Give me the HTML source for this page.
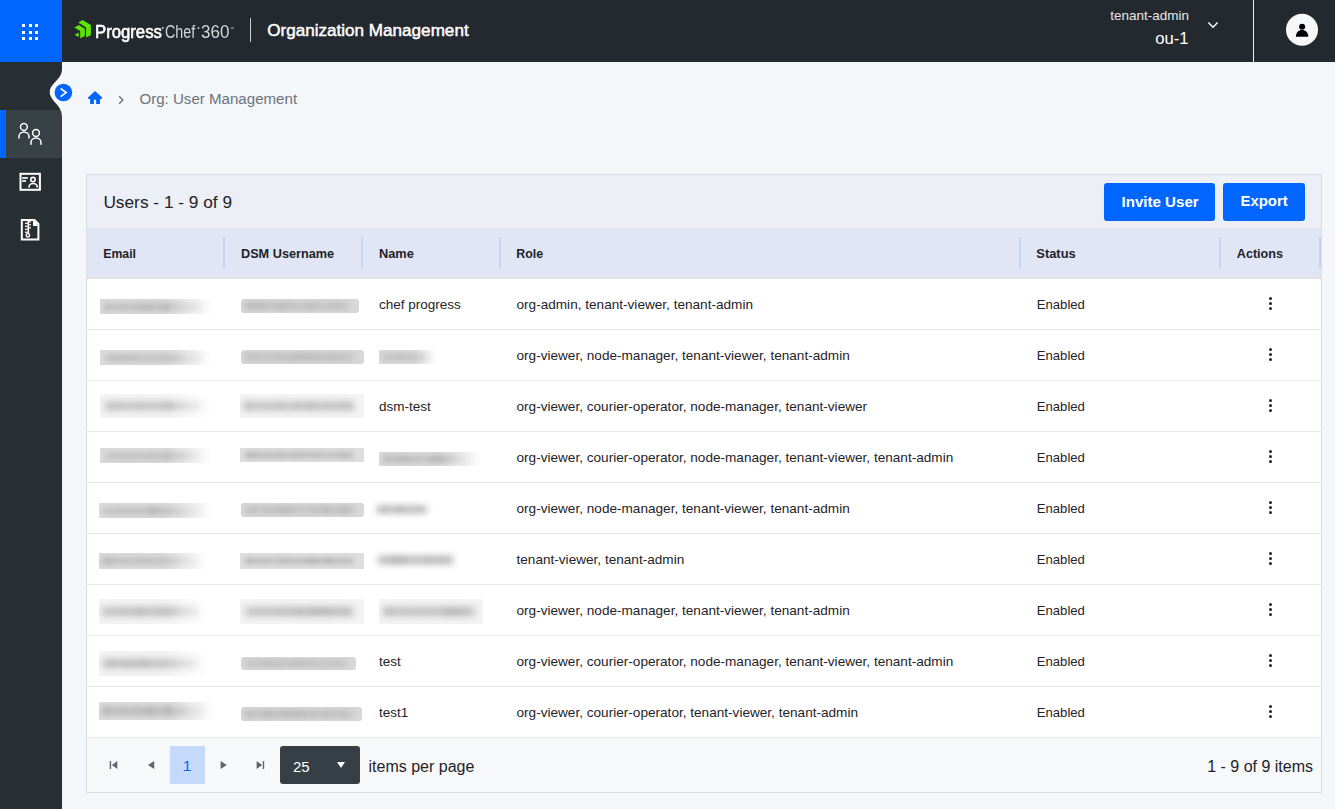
<!DOCTYPE html>
<html><head><meta charset="utf-8"><title>Organization Management</title>
<style>
*{box-sizing:border-box;margin:0;padding:0}
html,body{width:1335px;height:809px;overflow:hidden;background:#f4f7fa;font-family:"Liberation Sans",sans-serif;color:#1f2328}
.a{position:absolute}
.t{position:absolute;white-space:nowrap;line-height:1}
.dot{position:absolute;width:3px;height:3px;background:#fff}
.row{position:absolute;left:87px;width:1234px;height:51px;background:#fff;border-bottom:1px solid #e4e6e9}
.vdiv{position:absolute;top:237px;width:2px;height:31px;background:#c8d5f0}
.kb{position:absolute;width:3px;height:3px;border-radius:50%;background:#1f2328}
.bl{position:absolute}
.br{border-radius:3px}
</style></head>
<body>
<div class="a" style="left:0;top:0;width:1335px;height:62px;background:#242930"></div>
<div class="a" style="left:0;top:0;width:62px;height:62px;background:#0066ff"><div class="dot" style="left:22px;top:24px"></div><div class="dot" style="left:29px;top:24px"></div><div class="dot" style="left:35px;top:24px"></div><div class="dot" style="left:22px;top:31px"></div><div class="dot" style="left:29px;top:31px"></div><div class="dot" style="left:35px;top:31px"></div><div class="dot" style="left:22px;top:37px"></div><div class="dot" style="left:29px;top:37px"></div><div class="dot" style="left:35px;top:37px"></div></div>
<svg class="a" style="left:0;top:0" width="260" height="62" viewBox="0 0 260 62">
<path fill="#5ce500" d="M78.3,22.6 L82.6,20 L90.9,25 L90.9,35.2 L86.1,37.6 L86.1,27.4 Z"/>
<path fill="#5ce500" d="M74.4,27.4 L78.7,25 L84.8,28.7 L84.8,36.1 L80.2,38.5 L80.2,31 Z"/>
<path fill="#5ce500" d="M74.6,34.7 L78.7,32.4 L78.7,37.2 Z"/>
<circle cx="162.8" cy="28" r="0.9" fill="#ddd"/>
<circle cx="198.5" cy="28" r="0.9" fill="#ddd"/>
<rect x="230.6" y="27.6" width="3.4" height="0.9" fill="#bbb"/>
<rect x="250" y="18" width="1" height="24" fill="#c9ccd0"/>
</svg>
<div class="t" style="left:95.30px;top:23.90px;font-size:17.6px;color:#fff;font-weight:400;-webkit-text-stroke:0.6px #fff;transform:scaleX(0.95);transform-origin:0 0;">Progress</div>
<div class="t" style="left:165.30px;top:23.19px;font-size:18.8px;color:#d5d6d8;font-weight:400;transform:scaleX(0.76);transform-origin:0 0;">Chef</div>
<div class="t" style="left:200.80px;top:23.95px;font-size:17.9px;color:#d5d6d8;font-weight:400;transform:scaleX(0.95);transform-origin:0 0;">360</div>
<div class="t" style="left:267.20px;top:21.62px;font-size:17.1px;color:#fff;font-weight:400;-webkit-text-stroke:0.45px #fff;">Organization Management</div>
<div class="t" style="right:146.00px;top:9.27px;font-size:13.5px;color:#e8e8e8;font-weight:400;">tenant-admin</div>
<div class="t" style="right:146.40px;top:30.86px;font-size:16.7px;color:#fff;font-weight:400;">ou-1</div>
<svg class="a" style="left:1200px;top:15px" width="25" height="20" viewBox="1200 15 25 20"><polyline points="1208.4,22.4 1213,27.2 1217.6,22.4" fill="none" stroke="#fff" stroke-width="1.4"/></svg>
<div class="a" style="left:1253px;top:0;width:1px;height:62px;background:#eef0f2"></div>
<svg class="a" style="left:1284px;top:12px" width="36" height="36" viewBox="1284 12 36 36">
<circle cx="1302" cy="29.8" r="16" fill="#f6f7f8"/>
<circle cx="1302.1" cy="26.7" r="3" fill="#000"/>
<path d="M1295.9,36.8 C1295.9,32.6 1298.6,30 1302.1,30 C1305.6,30 1308.3,32.6 1308.3,36.8 Z" fill="#000"/>
</svg>
<div class="a" style="left:0;top:62px;width:62px;height:747px;background:#282f32"></div>
<div class="a" style="left:0;top:110px;width:62px;height:48px;background:#374146"></div>
<div class="a" style="left:0;top:110px;width:6px;height:48px;background:#0066ff"></div>
<svg class="a" style="left:40px;top:62px" width="40" height="60" viewBox="40 62 40 60">
<path d="M62,69 C62,80 49.8,83 49.8,92 C49.8,101 62,105 62,116 Z" fill="#fbfcfd"/>
<circle cx="63.4" cy="92.5" r="8.8" fill="#0066ff"/>
<polyline points="60.6,88.5 66.2,92.6 60.6,96.7" fill="none" stroke="#fff" stroke-width="1.6"/>
</svg>
<svg class="a" style="left:0;top:110px" width="62" height="140" viewBox="0 110 62 140" fill="none" stroke="#fff" stroke-width="1.5">
<circle cx="23.9" cy="126.9" r="3.4"/>
<path d="M19,138.6 V136.5 A4.9,4.4 0 0 1 29,136.5 V138.6"/>
<circle cx="36" cy="133" r="3.4"/>
<path d="M31,144.8 V142.6 A4.9,4.4 0 0 1 41,142.6 V144.8"/>
<rect x="20.5" y="173.8" width="19.4" height="16" stroke-width="2"/>
<line x1="22.2" y1="178" x2="27.8" y2="178" stroke-width="1.7"/>
<line x1="22.2" y1="181" x2="26" y2="181" stroke-width="1.7"/>
<circle cx="32.95" cy="179.6" r="2.2" stroke-width="1.6"/>
<path d="M29.1,187.4 V186.6 A3.9,3 0 0 1 37.2,186.6 V187.4" stroke-width="1.6"/>
<path d="M21.8,220 H34.5 L38.4,223.9 V239.6 H21.8 Z" stroke-width="2" stroke-linejoin="miter"/>
</svg>
<svg class="a" style="left:0;top:210px" width="62" height="40" viewBox="0 210 62 40" fill="#fff">
<path d="M33,221 H34.9 L37.4,223.5 V226 H33 Z"/>
<rect x="27.5" y="221" width="1.6" height="12.5"/>
<rect x="25" y="222.6" width="2.5" height="1.3"/><rect x="25" y="225.6" width="2.5" height="1.3"/><rect x="25" y="228.6" width="2.5" height="1.3"/><rect x="25" y="231.6" width="2.5" height="1.3"/>
<rect x="29.1" y="221.1" width="1.8" height="1.3"/><rect x="29.1" y="224.1" width="1.8" height="1.3"/><rect x="29.1" y="227.1" width="1.8" height="1.3"/>
<circle cx="27.9" cy="235.3" r="1.7" fill="none" stroke="#fff" stroke-width="1.4"/>
</svg>
<svg class="a" style="left:84px;top:86px" width="44" height="22" viewBox="84 86 44 22">
<path fill="#0066ff" d="M95,90.9 L88,97.5 L88.3,98.9 L90.1,98.9 L90.1,104 L93.9,104 L93.9,99.8 L96.1,99.8 L96.1,104 L100,104 L100,98.9 L101.8,98.9 L102.1,97.5 Z"/>
<polyline points="119.2,96.3 122.8,100 119.2,103.7" fill="none" stroke="#6d7378" stroke-width="1.4"/>
</svg>
<div class="t" style="left:139.40px;top:91.02px;font-size:15.1px;color:#6b737d;font-weight:400;">Org: User Management</div>
<div class="a" style="left:86px;top:174px;width:1236px;height:619px;border:1px solid #d9dde2;background:#fff"></div>
<div class="a" style="left:87px;top:175px;width:1234px;height:54px;background:#eceff6;border-bottom:1px solid #dfe2e7"></div>
<div class="a" style="left:87px;top:229px;width:1234px;height:50px;background:#e0e6f6;border-bottom:2px solid #e0e3e7"></div>
<div class="t" style="left:103.40px;top:193.96px;font-size:17.3px;color:#1f2328;font-weight:400;">Users - 1 - 9 of 9</div>
<div class="bl br" style="left:1104px;top:183px;width:111px;height:38px;background:#0066ff"></div>
<div class="bl br" style="left:1223px;top:183px;width:82px;height:38px;background:#0066ff"></div>
<div class="t" style="left:1121.50px;top:194.02px;font-size:15.1px;color:#fff;font-weight:700;">Invite User</div>
<div class="t" style="left:1240.50px;top:194.19px;font-size:14.9px;color:#fff;font-weight:700;">Export</div>
<div class="t" style="left:103.20px;top:248.19px;font-size:12.3px;color:#1f2328;font-weight:700;">Email</div>
<div class="t" style="left:241.00px;top:247.85px;font-size:12.7px;color:#1f2328;font-weight:700;">DSM Username</div>
<div class="t" style="left:379.00px;top:247.76px;font-size:12.8px;color:#1f2328;font-weight:700;">Name</div>
<div class="t" style="left:516.30px;top:248.10px;font-size:12.4px;color:#1f2328;font-weight:700;">Role</div>
<div class="t" style="left:1036.30px;top:247.68px;font-size:12.9px;color:#1f2328;font-weight:700;">Status</div>
<div class="t" style="left:1236.80px;top:247.93px;font-size:12.6px;color:#1f2328;font-weight:700;">Actions</div>
<div class="vdiv" style="left:223px"></div>
<div class="vdiv" style="left:361px"></div>
<div class="vdiv" style="left:499px"></div>
<div class="vdiv" style="left:1019px"></div>
<div class="vdiv" style="left:1219px"></div>
<div class="vdiv" style="left:1319px"></div>
<div class="row" style="top:279px"></div>
<div class="t" style="left:379.00px;top:298.27px;font-size:13.5px;color:#1f2328;font-weight:400;">chef progress</div>
<div class="t" style="left:516.50px;top:298.19px;font-size:13.6px;color:#1f2328;font-weight:400;">org-admin, tenant-viewer, tenant-admin</div>
<div class="t" style="left:1036.80px;top:297.71px;font-size:13.1px;color:#1f2328;font-weight:400;">Enabled</div>
<div class="kb" style="left:1269px;top:296.9px"></div><div class="kb" style="left:1269px;top:301.9px"></div><div class="kb" style="left:1269px;top:306.9px"></div>
<div class="bl" style="left:100px;top:299px;width:113px;height:15px;background:#dcdcdc;-webkit-mask-image:linear-gradient(90deg,#000 60%,rgba(0,0,0,0) 100%);mask-image:linear-gradient(90deg,#000 60%,rgba(0,0,0,0) 100%);overflow:hidden"><div style="position:absolute;left:0;top:0;width:113px;height:15px;filter:blur(3px)"><div style="position:absolute;left:4.5px;top:4.5px;width:99.4px;height:6.0px;background:rgb(190,190,190)"></div><div style="position:absolute;left:3.8px;top:4.5px;width:8.2px;height:6.0px;background:rgb(173,173,173)"></div><div style="position:absolute;left:17.0px;top:4.5px;width:10.9px;height:6.0px;background:rgb(183,183,183)"></div><div style="position:absolute;left:33.3px;top:4.5px;width:13.6px;height:6.0px;background:rgb(178,178,178)"></div><div style="position:absolute;left:45.3px;top:4.5px;width:10.2px;height:6.0px;background:rgb(174,174,174)"></div><div style="position:absolute;left:60.3px;top:4.5px;width:11.0px;height:6.0px;background:rgb(173,173,173)"></div><div style="position:absolute;left:76.9px;top:4.5px;width:8.0px;height:6.0px;background:rgb(179,179,179)"></div><div style="position:absolute;left:90.3px;top:4.5px;width:11.2px;height:6.0px;background:rgb(173,173,173)"></div></div></div>
<div class="bl" style="left:241px;top:299px;width:118px;height:14px;background:#d8d8d8;border-radius:3px;overflow:hidden"><div style="position:absolute;left:0;top:0;width:118px;height:14px;filter:blur(3px)"><div style="position:absolute;left:4.7px;top:4.2px;width:103.8px;height:5.6px;background:rgb(192,192,192)"></div><div style="position:absolute;left:3.6px;top:4.2px;width:14.6px;height:5.6px;background:rgb(178,178,178)"></div><div style="position:absolute;left:18.3px;top:4.2px;width:7.7px;height:5.6px;background:rgb(178,178,178)"></div><div style="position:absolute;left:33.4px;top:4.2px;width:14.8px;height:5.6px;background:rgb(180,180,180)"></div><div style="position:absolute;left:48.8px;top:4.2px;width:7.6px;height:5.6px;background:rgb(189,189,189)"></div><div style="position:absolute;left:63.9px;top:4.2px;width:11.1px;height:5.6px;background:rgb(180,180,180)"></div><div style="position:absolute;left:80.5px;top:4.2px;width:10.4px;height:5.6px;background:rgb(189,189,189)"></div><div style="position:absolute;left:92.7px;top:4.2px;width:7.6px;height:5.6px;background:rgb(182,182,182)"></div></div></div>
<div class="row" style="top:330px"></div>
<div class="t" style="left:516.50px;top:349.19px;font-size:13.6px;color:#1f2328;font-weight:400;">org-viewer, node-manager, tenant-viewer, tenant-admin</div>
<div class="t" style="left:1036.80px;top:348.71px;font-size:13.1px;color:#1f2328;font-weight:400;">Enabled</div>
<div class="kb" style="left:1269px;top:347.9px"></div><div class="kb" style="left:1269px;top:352.9px"></div><div class="kb" style="left:1269px;top:357.9px"></div>
<div class="bl" style="left:100px;top:350px;width:112px;height:15px;background:#dcdcdc;-webkit-mask-image:linear-gradient(90deg,#000 60%,rgba(0,0,0,0) 100%);mask-image:linear-gradient(90deg,#000 60%,rgba(0,0,0,0) 100%);overflow:hidden"><div style="position:absolute;left:0;top:0;width:112px;height:15px;filter:blur(3px)"><div style="position:absolute;left:4.5px;top:4.5px;width:98.6px;height:6.0px;background:rgb(190,190,190)"></div><div style="position:absolute;left:4.6px;top:4.5px;width:12.7px;height:6.0px;background:rgb(183,183,183)"></div><div style="position:absolute;left:17.7px;top:4.5px;width:12.4px;height:6.0px;background:rgb(180,180,180)"></div><div style="position:absolute;left:31.1px;top:4.5px;width:7.2px;height:6.0px;background:rgb(184,184,184)"></div><div style="position:absolute;left:48.0px;top:4.5px;width:10.0px;height:6.0px;background:rgb(188,188,188)"></div><div style="position:absolute;left:62.0px;top:4.5px;width:11.5px;height:6.0px;background:rgb(184,184,184)"></div><div style="position:absolute;left:73.4px;top:4.5px;width:10.9px;height:6.0px;background:rgb(176,176,176)"></div><div style="position:absolute;left:90.2px;top:4.5px;width:13.2px;height:6.0px;background:rgb(176,176,176)"></div></div></div>
<div class="bl" style="left:241px;top:350px;width:123px;height:14px;background:#d8d8d8;border-radius:3px;overflow:hidden"><div style="position:absolute;left:0;top:0;width:123px;height:14px;filter:blur(3px)"><div style="position:absolute;left:4.9px;top:4.2px;width:108.2px;height:5.6px;background:rgb(192,192,192)"></div><div style="position:absolute;left:3.6px;top:4.2px;width:12.8px;height:5.6px;background:rgb(184,184,184)"></div><div style="position:absolute;left:19.3px;top:4.2px;width:15.1px;height:5.6px;background:rgb(189,189,189)"></div><div style="position:absolute;left:34.6px;top:4.2px;width:10.0px;height:5.6px;background:rgb(182,182,182)"></div><div style="position:absolute;left:50.1px;top:4.2px;width:14.7px;height:5.6px;background:rgb(177,177,177)"></div><div style="position:absolute;left:66.1px;top:4.2px;width:12.9px;height:5.6px;background:rgb(179,179,179)"></div><div style="position:absolute;left:83.7px;top:4.2px;width:15.0px;height:5.6px;background:rgb(181,181,181)"></div><div style="position:absolute;left:96.4px;top:4.2px;width:9.3px;height:5.6px;background:rgb(185,185,185)"></div></div></div>
<div class="bl" style="left:379px;top:350px;width:58px;height:14px;background:#dcdcdc;-webkit-mask-image:linear-gradient(90deg,#000 60%,rgba(0,0,0,0) 100%);mask-image:linear-gradient(90deg,#000 60%,rgba(0,0,0,0) 100%);overflow:hidden"><div style="position:absolute;left:0;top:0;width:58px;height:14px;filter:blur(3px)"><div style="position:absolute;left:2.3px;top:4.2px;width:51.0px;height:5.6px;background:rgb(190,190,190)"></div><div style="position:absolute;left:3.0px;top:4.2px;width:15.2px;height:5.6px;background:rgb(188,188,188)"></div><div style="position:absolute;left:17.8px;top:4.2px;width:10.2px;height:5.6px;background:rgb(183,183,183)"></div><div style="position:absolute;left:38.3px;top:4.2px;width:11.0px;height:5.6px;background:rgb(176,176,176)"></div></div></div>
<div class="row" style="top:381px"></div>
<div class="t" style="left:379.00px;top:400.27px;font-size:13.5px;color:#1f2328;font-weight:400;">dsm-test</div>
<div class="t" style="left:516.50px;top:400.19px;font-size:13.6px;color:#1f2328;font-weight:400;">org-viewer, courier-operator, node-manager, tenant-viewer</div>
<div class="t" style="left:1036.80px;top:399.71px;font-size:13.1px;color:#1f2328;font-weight:400;">Enabled</div>
<div class="kb" style="left:1269px;top:398.9px"></div><div class="kb" style="left:1269px;top:403.9px"></div><div class="kb" style="left:1269px;top:408.9px"></div>
<div class="bl" style="left:100px;top:394px;width:113px;height:24px;background:#f4f4f4;-webkit-mask-image:linear-gradient(90deg,#000 60%,rgba(0,0,0,0) 100%);mask-image:linear-gradient(90deg,#000 60%,rgba(0,0,0,0) 100%);overflow:hidden"><div style="position:absolute;left:0;top:0;width:113px;height:24px;filter:blur(3.5px)"><div style="position:absolute;left:4.5px;top:7.7px;width:99.4px;height:8.6px;background:rgb(194,194,194)"></div><div style="position:absolute;left:5.1px;top:7.7px;width:12.1px;height:8.6px;background:rgb(185,185,185)"></div><div style="position:absolute;left:17.5px;top:7.7px;width:7.6px;height:8.6px;background:rgb(186,186,186)"></div><div style="position:absolute;left:31.9px;top:7.7px;width:13.0px;height:8.6px;background:rgb(188,188,188)"></div><div style="position:absolute;left:45.9px;top:7.7px;width:13.6px;height:8.6px;background:rgb(191,191,191)"></div><div style="position:absolute;left:62.6px;top:7.7px;width:12.3px;height:8.6px;background:rgb(178,178,178)"></div><div style="position:absolute;left:76.0px;top:7.7px;width:10.1px;height:8.6px;background:rgb(189,189,189)"></div><div style="position:absolute;left:90.7px;top:7.7px;width:11.8px;height:8.6px;background:rgb(187,187,187)"></div></div></div>
<div class="bl" style="left:240px;top:394px;width:124px;height:24px;background:#f4f4f4;overflow:hidden"><div style="position:absolute;left:0;top:0;width:124px;height:24px;filter:blur(3.5px)"><div style="position:absolute;left:5.0px;top:7.7px;width:109.1px;height:8.6px;background:rgb(194,194,194)"></div><div style="position:absolute;left:3.4px;top:7.7px;width:8.8px;height:8.6px;background:rgb(181,181,181)"></div><div style="position:absolute;left:19.5px;top:7.7px;width:12.8px;height:8.6px;background:rgb(189,189,189)"></div><div style="position:absolute;left:35.0px;top:7.7px;width:8.9px;height:8.6px;background:rgb(181,181,181)"></div><div style="position:absolute;left:53.1px;top:7.7px;width:8.8px;height:8.6px;background:rgb(182,182,182)"></div><div style="position:absolute;left:66.1px;top:7.7px;width:11.0px;height:8.6px;background:rgb(178,178,178)"></div><div style="position:absolute;left:81.3px;top:7.7px;width:15.5px;height:8.6px;background:rgb(186,186,186)"></div><div style="position:absolute;left:99.3px;top:7.7px;width:14.2px;height:8.6px;background:rgb(181,181,181)"></div></div></div>
<div class="row" style="top:432px"></div>
<div class="t" style="left:516.50px;top:451.19px;font-size:13.6px;color:#1f2328;font-weight:400;">org-viewer, courier-operator, node-manager, tenant-viewer, tenant-admin</div>
<div class="t" style="left:1036.80px;top:450.71px;font-size:13.1px;color:#1f2328;font-weight:400;">Enabled</div>
<div class="kb" style="left:1269px;top:449.9px"></div><div class="kb" style="left:1269px;top:454.9px"></div><div class="kb" style="left:1269px;top:459.9px"></div>
<div class="bl" style="left:100px;top:448px;width:112px;height:15px;background:#dcdcdc;-webkit-mask-image:linear-gradient(90deg,#000 60%,rgba(0,0,0,0) 100%);mask-image:linear-gradient(90deg,#000 60%,rgba(0,0,0,0) 100%);overflow:hidden"><div style="position:absolute;left:0;top:0;width:112px;height:15px;filter:blur(3px)"><div style="position:absolute;left:4.5px;top:4.5px;width:98.6px;height:6.0px;background:rgb(190,190,190)"></div><div style="position:absolute;left:5.2px;top:4.5px;width:7.7px;height:6.0px;background:rgb(188,188,188)"></div><div style="position:absolute;left:16.7px;top:4.5px;width:14.0px;height:6.0px;background:rgb(186,186,186)"></div><div style="position:absolute;left:32.8px;top:4.5px;width:7.8px;height:6.0px;background:rgb(186,186,186)"></div><div style="position:absolute;left:47.1px;top:4.5px;width:9.0px;height:6.0px;background:rgb(184,184,184)"></div><div style="position:absolute;left:62.7px;top:4.5px;width:10.0px;height:6.0px;background:rgb(176,176,176)"></div><div style="position:absolute;left:76.7px;top:4.5px;width:13.9px;height:6.0px;background:rgb(173,173,173)"></div><div style="position:absolute;left:87.3px;top:4.5px;width:7.6px;height:6.0px;background:rgb(181,181,181)"></div></div></div>
<div class="bl" style="left:240px;top:448px;width:124px;height:14px;background:#dedede;overflow:hidden"><div style="position:absolute;left:0;top:0;width:124px;height:14px;filter:blur(2.5px)"><div style="position:absolute;left:5.0px;top:4.2px;width:109.1px;height:5.6px;background:rgb(194,194,194)"></div><div style="position:absolute;left:5.5px;top:4.2px;width:11.1px;height:5.6px;background:rgb(179,179,179)"></div><div style="position:absolute;left:18.8px;top:4.2px;width:13.2px;height:5.6px;background:rgb(187,187,187)"></div><div style="position:absolute;left:34.3px;top:4.2px;width:13.0px;height:5.6px;background:rgb(187,187,187)"></div><div style="position:absolute;left:51.0px;top:4.2px;width:13.3px;height:5.6px;background:rgb(185,185,185)"></div><div style="position:absolute;left:67.2px;top:4.2px;width:15.3px;height:5.6px;background:rgb(188,188,188)"></div><div style="position:absolute;left:81.8px;top:4.2px;width:12.6px;height:5.6px;background:rgb(192,192,192)"></div><div style="position:absolute;left:98.4px;top:4.2px;width:11.2px;height:5.6px;background:rgb(183,183,183)"></div></div></div>
<div class="bl" style="left:379px;top:452px;width:103px;height:14px;background:#dcdcdc;-webkit-mask-image:linear-gradient(90deg,#000 60%,rgba(0,0,0,0) 100%);mask-image:linear-gradient(90deg,#000 60%,rgba(0,0,0,0) 100%);overflow:hidden"><div style="position:absolute;left:0;top:0;width:103px;height:14px;filter:blur(3px)"><div style="position:absolute;left:4.1px;top:4.2px;width:90.6px;height:5.6px;background:rgb(190,190,190)"></div><div style="position:absolute;left:3.0px;top:4.2px;width:10.5px;height:5.6px;background:rgb(178,178,178)"></div><div style="position:absolute;left:18.1px;top:4.2px;width:13.1px;height:5.6px;background:rgb(172,172,172)"></div><div style="position:absolute;left:34.9px;top:4.2px;width:9.5px;height:5.6px;background:rgb(183,183,183)"></div><div style="position:absolute;left:50.3px;top:4.2px;width:14.8px;height:5.6px;background:rgb(172,172,172)"></div><div style="position:absolute;left:63.7px;top:4.2px;width:14.2px;height:5.6px;background:rgb(174,174,174)"></div><div style="position:absolute;left:79.1px;top:4.2px;width:8.4px;height:5.6px;background:rgb(183,183,183)"></div></div></div>
<div class="row" style="top:483px"></div>
<div class="t" style="left:516.50px;top:502.19px;font-size:13.6px;color:#1f2328;font-weight:400;">org-viewer, node-manager, tenant-viewer, tenant-admin</div>
<div class="t" style="left:1036.80px;top:501.71px;font-size:13.1px;color:#1f2328;font-weight:400;">Enabled</div>
<div class="kb" style="left:1269px;top:500.9px"></div><div class="kb" style="left:1269px;top:505.9px"></div><div class="kb" style="left:1269px;top:510.9px"></div>
<div class="bl" style="left:99px;top:503px;width:114px;height:15px;background:#dcdcdc;-webkit-mask-image:linear-gradient(90deg,#000 60%,rgba(0,0,0,0) 100%);mask-image:linear-gradient(90deg,#000 60%,rgba(0,0,0,0) 100%);overflow:hidden"><div style="position:absolute;left:0;top:0;width:114px;height:15px;filter:blur(3px)"><div style="position:absolute;left:4.6px;top:4.5px;width:100.3px;height:6.0px;background:rgb(190,190,190)"></div><div style="position:absolute;left:4.0px;top:4.5px;width:10.2px;height:6.0px;background:rgb(186,186,186)"></div><div style="position:absolute;left:19.2px;top:4.5px;width:9.0px;height:6.0px;background:rgb(184,184,184)"></div><div style="position:absolute;left:32.8px;top:4.5px;width:7.5px;height:6.0px;background:rgb(185,185,185)"></div><div style="position:absolute;left:48.2px;top:4.5px;width:14.0px;height:6.0px;background:rgb(172,172,172)"></div><div style="position:absolute;left:60.9px;top:4.5px;width:14.1px;height:6.0px;background:rgb(187,187,187)"></div><div style="position:absolute;left:77.1px;top:4.5px;width:7.2px;height:6.0px;background:rgb(182,182,182)"></div><div style="position:absolute;left:90.8px;top:4.5px;width:8.8px;height:6.0px;background:rgb(188,188,188)"></div></div></div>
<div class="bl" style="left:241px;top:503px;width:123px;height:14px;background:#d8d8d8;border-radius:3px;overflow:hidden"><div style="position:absolute;left:0;top:0;width:123px;height:14px;filter:blur(3px)"><div style="position:absolute;left:4.9px;top:4.2px;width:108.2px;height:5.6px;background:rgb(192,192,192)"></div><div style="position:absolute;left:5.1px;top:4.2px;width:8.8px;height:5.6px;background:rgb(183,183,183)"></div><div style="position:absolute;left:21.6px;top:4.2px;width:11.6px;height:5.6px;background:rgb(187,187,187)"></div><div style="position:absolute;left:34.5px;top:4.2px;width:15.2px;height:5.6px;background:rgb(177,177,177)"></div><div style="position:absolute;left:51.3px;top:4.2px;width:9.4px;height:5.6px;background:rgb(190,190,190)"></div><div style="position:absolute;left:67.0px;top:4.2px;width:11.7px;height:5.6px;background:rgb(189,189,189)"></div><div style="position:absolute;left:81.1px;top:4.2px;width:8.3px;height:5.6px;background:rgb(176,176,176)"></div><div style="position:absolute;left:96.2px;top:4.2px;width:12.9px;height:5.6px;background:rgb(178,178,178)"></div></div></div>
<div class="bl" style="left:376px;top:501px;width:55px;height:17px;background:transparent;"><div style="position:absolute;left:0;top:0;width:55px;height:17px;filter:blur(3.5px)"><div style="position:absolute;left:2.2px;top:4.8px;width:48.4px;height:7.5px;background:rgb(184,184,184)"></div><div style="position:absolute;left:0.5px;top:4.8px;width:11.4px;height:7.5px;background:rgb(169,169,169)"></div><div style="position:absolute;left:17.6px;top:4.8px;width:12.5px;height:7.5px;background:rgb(167,167,167)"></div><div style="position:absolute;left:35.2px;top:4.8px;width:14.2px;height:7.5px;background:rgb(174,174,174)"></div></div></div>
<div class="row" style="top:534px"></div>
<div class="t" style="left:516.50px;top:553.19px;font-size:13.6px;color:#1f2328;font-weight:400;">tenant-viewer, tenant-admin</div>
<div class="t" style="left:1036.80px;top:552.71px;font-size:13.1px;color:#1f2328;font-weight:400;">Enabled</div>
<div class="kb" style="left:1269px;top:551.9px"></div><div class="kb" style="left:1269px;top:556.9px"></div><div class="kb" style="left:1269px;top:561.9px"></div>
<div class="bl" style="left:99px;top:553px;width:109px;height:16px;background:#dcdcdc;-webkit-mask-image:linear-gradient(90deg,#000 60%,rgba(0,0,0,0) 100%);mask-image:linear-gradient(90deg,#000 60%,rgba(0,0,0,0) 100%);overflow:hidden"><div style="position:absolute;left:0;top:0;width:109px;height:16px;filter:blur(3px)"><div style="position:absolute;left:4.4px;top:4.8px;width:95.9px;height:6.4px;background:rgb(190,190,190)"></div><div style="position:absolute;left:2.5px;top:4.8px;width:12.7px;height:6.4px;background:rgb(172,172,172)"></div><div style="position:absolute;left:19.2px;top:4.8px;width:10.6px;height:6.4px;background:rgb(187,187,187)"></div><div style="position:absolute;left:35.5px;top:4.8px;width:15.8px;height:6.4px;background:rgb(184,184,184)"></div><div style="position:absolute;left:50.4px;top:4.8px;width:13.9px;height:6.4px;background:rgb(188,188,188)"></div><div style="position:absolute;left:70.0px;top:4.8px;width:11.0px;height:6.4px;background:rgb(184,184,184)"></div><div style="position:absolute;left:86.2px;top:4.8px;width:13.2px;height:6.4px;background:rgb(187,187,187)"></div></div></div>
<div class="bl" style="left:240px;top:553px;width:124px;height:16px;background:#dedede;overflow:hidden"><div style="position:absolute;left:0;top:0;width:124px;height:16px;filter:blur(2.5px)"><div style="position:absolute;left:5.0px;top:4.8px;width:109.1px;height:6.4px;background:rgb(194,194,194)"></div><div style="position:absolute;left:5.3px;top:4.8px;width:9.4px;height:6.4px;background:rgb(182,182,182)"></div><div style="position:absolute;left:18.7px;top:4.8px;width:11.3px;height:6.4px;background:rgb(187,187,187)"></div><div style="position:absolute;left:37.9px;top:4.8px;width:14.1px;height:6.4px;background:rgb(184,184,184)"></div><div style="position:absolute;left:53.6px;top:4.8px;width:14.1px;height:6.4px;background:rgb(189,189,189)"></div><div style="position:absolute;left:66.4px;top:4.8px;width:12.3px;height:6.4px;background:rgb(176,176,176)"></div><div style="position:absolute;left:82.9px;top:4.8px;width:11.5px;height:6.4px;background:rgb(178,178,178)"></div><div style="position:absolute;left:98.3px;top:4.8px;width:12.9px;height:6.4px;background:rgb(187,187,187)"></div></div></div>
<div class="bl" style="left:376px;top:550px;width:84px;height:20px;background:transparent;"><div style="position:absolute;left:0;top:0;width:84px;height:20px;filter:blur(3.5px)"><div style="position:absolute;left:3.4px;top:5.6px;width:73.9px;height:8.8px;background:rgb(184,184,184)"></div><div style="position:absolute;left:2.3px;top:5.6px;width:14.3px;height:8.8px;background:rgb(180,180,180)"></div><div style="position:absolute;left:16.2px;top:5.6px;width:13.7px;height:8.8px;background:rgb(166,166,166)"></div><div style="position:absolute;left:33.6px;top:5.6px;width:7.5px;height:8.8px;background:rgb(181,181,181)"></div><div style="position:absolute;left:47.2px;top:5.6px;width:13.4px;height:8.8px;background:rgb(175,175,175)"></div><div style="position:absolute;left:63.5px;top:5.6px;width:12.8px;height:8.8px;background:rgb(176,176,176)"></div></div></div>
<div class="row" style="top:585px"></div>
<div class="t" style="left:516.50px;top:604.19px;font-size:13.6px;color:#1f2328;font-weight:400;">org-viewer, node-manager, tenant-viewer, tenant-admin</div>
<div class="t" style="left:1036.80px;top:603.71px;font-size:13.1px;color:#1f2328;font-weight:400;">Enabled</div>
<div class="kb" style="left:1269px;top:602.9px"></div><div class="kb" style="left:1269px;top:607.9px"></div><div class="kb" style="left:1269px;top:612.9px"></div>
<div class="bl" style="left:99px;top:599px;width:111px;height:25px;background:#f4f4f4;-webkit-mask-image:linear-gradient(90deg,#000 60%,rgba(0,0,0,0) 100%);mask-image:linear-gradient(90deg,#000 60%,rgba(0,0,0,0) 100%);overflow:hidden"><div style="position:absolute;left:0;top:0;width:111px;height:25px;filter:blur(3.5px)"><div style="position:absolute;left:4.4px;top:8.0px;width:97.7px;height:9.0px;background:rgb(194,194,194)"></div><div style="position:absolute;left:2.7px;top:8.0px;width:14.4px;height:9.0px;background:rgb(190,190,190)"></div><div style="position:absolute;left:20.4px;top:8.0px;width:15.8px;height:9.0px;background:rgb(189,189,189)"></div><div style="position:absolute;left:37.0px;top:8.0px;width:10.4px;height:9.0px;background:rgb(182,182,182)"></div><div style="position:absolute;left:53.9px;top:8.0px;width:13.6px;height:9.0px;background:rgb(185,185,185)"></div><div style="position:absolute;left:67.7px;top:8.0px;width:11.7px;height:9.0px;background:rgb(179,179,179)"></div><div style="position:absolute;left:86.6px;top:8.0px;width:12.1px;height:9.0px;background:rgb(183,183,183)"></div></div></div>
<div class="bl" style="left:240px;top:599px;width:124px;height:25px;background:#f4f4f4;overflow:hidden"><div style="position:absolute;left:0;top:0;width:124px;height:25px;filter:blur(3.5px)"><div style="position:absolute;left:5.0px;top:8.0px;width:109.1px;height:9.0px;background:rgb(194,194,194)"></div><div style="position:absolute;left:5.9px;top:8.0px;width:15.1px;height:9.0px;background:rgb(192,192,192)"></div><div style="position:absolute;left:19.0px;top:8.0px;width:12.3px;height:9.0px;background:rgb(189,189,189)"></div><div style="position:absolute;left:36.0px;top:8.0px;width:13.4px;height:9.0px;background:rgb(186,186,186)"></div><div style="position:absolute;left:51.5px;top:8.0px;width:12.1px;height:9.0px;background:rgb(181,181,181)"></div><div style="position:absolute;left:67.5px;top:8.0px;width:13.8px;height:9.0px;background:rgb(179,179,179)"></div><div style="position:absolute;left:81.1px;top:8.0px;width:13.5px;height:9.0px;background:rgb(179,179,179)"></div><div style="position:absolute;left:100.0px;top:8.0px;width:8.2px;height:9.0px;background:rgb(181,181,181)"></div></div></div>
<div class="bl" style="left:379px;top:599px;width:104px;height:25px;background:#f4f4f4;overflow:hidden"><div style="position:absolute;left:0;top:0;width:104px;height:25px;filter:blur(3.5px)"><div style="position:absolute;left:4.2px;top:8.0px;width:91.5px;height:9.0px;background:rgb(194,194,194)"></div><div style="position:absolute;left:4.9px;top:8.0px;width:8.4px;height:9.0px;background:rgb(181,181,181)"></div><div style="position:absolute;left:17.7px;top:8.0px;width:10.3px;height:9.0px;background:rgb(189,189,189)"></div><div style="position:absolute;left:34.5px;top:8.0px;width:10.9px;height:9.0px;background:rgb(190,190,190)"></div><div style="position:absolute;left:51.2px;top:8.0px;width:10.1px;height:9.0px;background:rgb(190,190,190)"></div><div style="position:absolute;left:63.7px;top:8.0px;width:15.2px;height:9.0px;background:rgb(178,178,178)"></div><div style="position:absolute;left:80.1px;top:8.0px;width:8.7px;height:9.0px;background:rgb(180,180,180)"></div></div></div>
<div class="row" style="top:636px"></div>
<div class="t" style="left:379.00px;top:655.27px;font-size:13.5px;color:#1f2328;font-weight:400;">test</div>
<div class="t" style="left:516.50px;top:655.19px;font-size:13.6px;color:#1f2328;font-weight:400;">org-viewer, courier-operator, node-manager, tenant-viewer, tenant-admin</div>
<div class="t" style="left:1036.80px;top:654.71px;font-size:13.1px;color:#1f2328;font-weight:400;">Enabled</div>
<div class="kb" style="left:1269px;top:653.9px"></div><div class="kb" style="left:1269px;top:658.9px"></div><div class="kb" style="left:1269px;top:663.9px"></div>
<div class="bl" style="left:99px;top:651px;width:111px;height:25px;background:#f4f4f4;-webkit-mask-image:linear-gradient(90deg,#000 60%,rgba(0,0,0,0) 100%);mask-image:linear-gradient(90deg,#000 60%,rgba(0,0,0,0) 100%);overflow:hidden"><div style="position:absolute;left:0;top:0;width:111px;height:25px;filter:blur(3.5px)"><div style="position:absolute;left:4.4px;top:8.0px;width:97.7px;height:9.0px;background:rgb(194,194,194)"></div><div style="position:absolute;left:5.6px;top:8.0px;width:10.8px;height:9.0px;background:rgb(183,183,183)"></div><div style="position:absolute;left:19.5px;top:8.0px;width:15.8px;height:9.0px;background:rgb(185,185,185)"></div><div style="position:absolute;left:36.9px;top:8.0px;width:12.7px;height:9.0px;background:rgb(183,183,183)"></div><div style="position:absolute;left:51.9px;top:8.0px;width:13.3px;height:9.0px;background:rgb(192,192,192)"></div><div style="position:absolute;left:67.6px;top:8.0px;width:10.4px;height:9.0px;background:rgb(191,191,191)"></div><div style="position:absolute;left:84.5px;top:8.0px;width:14.8px;height:9.0px;background:rgb(192,192,192)"></div></div></div>
<div class="bl" style="left:241px;top:657px;width:115px;height:13px;background:#d8d8d8;border-radius:3px;overflow:hidden"><div style="position:absolute;left:0;top:0;width:115px;height:13px;filter:blur(3px)"><div style="position:absolute;left:4.6px;top:3.9px;width:101.2px;height:5.2px;background:rgb(192,192,192)"></div><div style="position:absolute;left:5.9px;top:3.9px;width:7.9px;height:5.2px;background:rgb(182,182,182)"></div><div style="position:absolute;left:20.0px;top:3.9px;width:13.7px;height:5.2px;background:rgb(178,178,178)"></div><div style="position:absolute;left:35.1px;top:3.9px;width:10.1px;height:5.2px;background:rgb(180,180,180)"></div><div style="position:absolute;left:49.7px;top:3.9px;width:10.6px;height:5.2px;background:rgb(174,174,174)"></div><div style="position:absolute;left:63.8px;top:3.9px;width:8.9px;height:5.2px;background:rgb(179,179,179)"></div><div style="position:absolute;left:76.3px;top:3.9px;width:9.7px;height:5.2px;background:rgb(187,187,187)"></div><div style="position:absolute;left:92.2px;top:3.9px;width:8.6px;height:5.2px;background:rgb(185,185,185)"></div></div></div>
<div class="row" style="top:687px"></div>
<div class="t" style="left:379.00px;top:706.27px;font-size:13.5px;color:#1f2328;font-weight:400;">test1</div>
<div class="t" style="left:516.50px;top:706.19px;font-size:13.6px;color:#1f2328;font-weight:400;">org-viewer, courier-operator, tenant-viewer, tenant-admin</div>
<div class="t" style="left:1036.80px;top:705.71px;font-size:13.1px;color:#1f2328;font-weight:400;">Enabled</div>
<div class="kb" style="left:1269px;top:704.9px"></div><div class="kb" style="left:1269px;top:709.9px"></div><div class="kb" style="left:1269px;top:714.9px"></div>
<div class="bl" style="left:99px;top:702px;width:116px;height:18px;background:#dcdcdc;-webkit-mask-image:linear-gradient(90deg,#000 60%,rgba(0,0,0,0) 100%);mask-image:linear-gradient(90deg,#000 60%,rgba(0,0,0,0) 100%);overflow:hidden"><div style="position:absolute;left:0;top:0;width:116px;height:18px;filter:blur(3px)"><div style="position:absolute;left:4.6px;top:5.4px;width:102.1px;height:7.2px;background:rgb(190,190,190)"></div><div style="position:absolute;left:3.2px;top:5.4px;width:8.7px;height:7.2px;background:rgb(175,175,175)"></div><div style="position:absolute;left:18.3px;top:5.4px;width:9.7px;height:7.2px;background:rgb(182,182,182)"></div><div style="position:absolute;left:35.3px;top:5.4px;width:13.9px;height:7.2px;background:rgb(183,183,183)"></div><div style="position:absolute;left:46.4px;top:5.4px;width:10.1px;height:7.2px;background:rgb(174,174,174)"></div><div style="position:absolute;left:64.3px;top:5.4px;width:11.0px;height:7.2px;background:rgb(174,174,174)"></div><div style="position:absolute;left:78.6px;top:5.4px;width:8.8px;height:7.2px;background:rgb(177,177,177)"></div><div style="position:absolute;left:92.9px;top:5.4px;width:14.2px;height:7.2px;background:rgb(181,181,181)"></div></div></div>
<div class="bl" style="left:241px;top:707px;width:121px;height:14px;background:#d8d8d8;border-radius:3px;overflow:hidden"><div style="position:absolute;left:0;top:0;width:121px;height:14px;filter:blur(3px)"><div style="position:absolute;left:4.8px;top:4.2px;width:106.5px;height:5.6px;background:rgb(192,192,192)"></div><div style="position:absolute;left:4.4px;top:4.2px;width:9.0px;height:5.6px;background:rgb(179,179,179)"></div><div style="position:absolute;left:20.6px;top:4.2px;width:11.6px;height:5.6px;background:rgb(174,174,174)"></div><div style="position:absolute;left:36.7px;top:4.2px;width:12.8px;height:5.6px;background:rgb(178,178,178)"></div><div style="position:absolute;left:49.4px;top:4.2px;width:14.8px;height:5.6px;background:rgb(178,178,178)"></div><div style="position:absolute;left:66.1px;top:4.2px;width:11.0px;height:5.6px;background:rgb(184,184,184)"></div><div style="position:absolute;left:81.6px;top:4.2px;width:8.7px;height:5.6px;background:rgb(179,179,179)"></div><div style="position:absolute;left:94.6px;top:4.2px;width:13.9px;height:5.6px;background:rgb(184,184,184)"></div></div></div>
<div class="a" style="left:87px;top:738px;width:1234px;height:54px;background:#f7f8fa"></div>
<div class="a" style="left:170px;top:746px;width:35px;height:38px;background:#c5dafa"></div>
<div class="t" style="left:182.80px;top:758.48px;font-size:15.5px;color:#0066ff;font-weight:400;">1</div>
<svg class="a" style="left:100px;top:750px" width="180" height="30" viewBox="100 750 180 30" fill="#5f656b">
<rect x="109.7" y="761" width="1.4" height="8"/><path d="M117.3,761 V769 L111.9,765 Z"/>
<path d="M154.2,761 V769 L148,765 Z"/>
<path d="M220.6,761 V769 L226.8,765 Z"/>
<path d="M256.6,761 V769 L262.2,765 Z"/><rect x="262.8" y="761" width="1.4" height="8"/>
</svg>
<div class="bl br" style="left:280px;top:746px;width:80px;height:38px;background:#353f45"></div>
<div class="t" style="left:293.00px;top:758.50px;font-size:15px;color:#fff;font-weight:400;">25</div>
<svg class="a" style="left:330px;top:755px" width="20" height="20" viewBox="330 755 20 20"><path d="M337,762 H345 L341,768 Z" fill="#fff"/></svg>
<div class="t" style="left:368.50px;top:759.06px;font-size:16px;color:#1f2328;font-weight:400;">items per page</div>
<div class="t" style="right:22.00px;top:759.06px;font-size:16px;color:#1f2328;font-weight:400;">1 - 9 of 9 items</div>
</body></html>
